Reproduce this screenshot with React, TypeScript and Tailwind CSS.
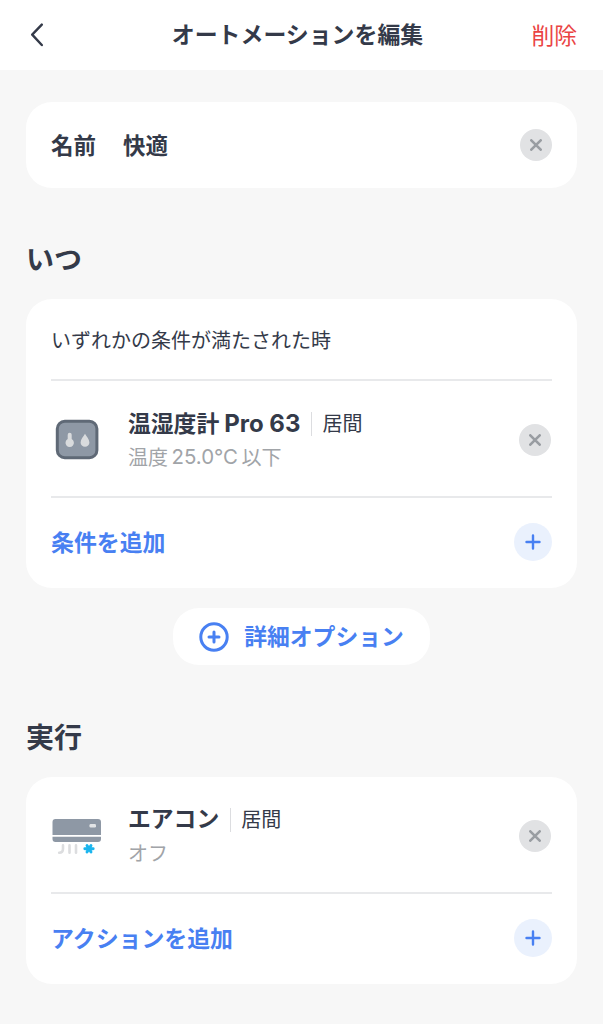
import type { ReactNode } from 'react';

function BackIcon() {
  return (
    <svg
      className="h-6 w-4"
      viewBox="0 0 16 24"
      fill="none"
      stroke="#343a49"
      strokeWidth="2.4"
      strokeLinecap="round"
      strokeLinejoin="round"
      aria-hidden
    >
      <path d="M12.8 1.6 3.2 11.6l9.6 10.4" />
    </svg>
  );
}

function MeterIcon() {
  return (
    <svg className="h-11 w-[50px]" viewBox="0 0 50 44" aria-hidden>
      <rect x="6.3" y="3.3" width="39.6" height="36.4" rx="7.5" fill="#8e98a5" stroke="#5f6976" strokeWidth="3" />
      <path d="M16.7 16.8a2 2 0 0 1 4 0v4.3a4.2 4.2 0 1 1-4 0z" fill="#d9dbdd" />
      <path
        d="M34 15.8c1.7 2.9 4.4 5.6 4.4 8.6a4.4 4.4 0 0 1-8.8 0c0-3 2.7-5.7 4.4-8.6z"
        fill="#d9dbdd"
      />
    </svg>
  );
}

function AirConditionerIcon() {
  return (
    <svg className="h-11 w-[50px]" viewBox="0 0 50 44" fill="none" aria-hidden>
      <path d="M4.5 5H47a3 3 0 0 1 3 3v13H1.500V8a3 3 0 0 1 3-3z" fill="#8e98a5" />
      <path d="M1.5 22.800H50V25a3 3 0 0 1-3 3H4.500a3 3 0 0 1-3-3z" fill="#8e98a5" />
      <rect x="38.5" y="10" width="6.500" height="3.400" rx="1.200" fill="#e2e4e6" />
      <path
        d="M12 31.400v3.300q0 4-3.800 4M18.500 31.400v7.300M25 31.400v7.300"
        stroke="#dcdddf"
        strokeWidth="2.6"
        strokeLinecap="round"
      />
      <path
        d="M33.800 34.800h8.400M36 31.600l4 6.400M40 31.600l-4 6.400"
        stroke="#1bb5ee"
        strokeWidth="2.9"
        strokeLinecap="round"
      />
    </svg>
  );
}

function ClearButton({ label }: { label: string }) {
  return (
    <button
      type="button"
      aria-label={label}
      className="flex size-8 shrink-0 items-center justify-center rounded-full bg-[#e1e2e4]"
    >
      <svg
        className="size-3"
        viewBox="0 0 12 12"
        stroke="#999da2"
        strokeWidth="2.6"
        strokeLinecap="round"
        aria-hidden
      >
        <path d="M1.300 1.300l9.400 9.400M10.700 1.300l-9.400 9.400" />
      </svg>
    </button>
  );
}

function AddRow({ label }: { label: string }) {
  return (
    <button type="button" className="flex h-[90px] w-full items-center justify-between pb-0.5">
      <span className="pt-0.5 text-[22.9px] font-bold text-[#4880f2]">{label}</span>
      <span className="flex size-[38px] items-center justify-center rounded-full bg-[#eaf1fd]">
        <svg
          className="size-4"
          viewBox="0 0 16 16"
          stroke="#4880f2"
          strokeWidth="2.4"
          strokeLinecap="round"
          aria-hidden
        >
          <path d="M8 1.500v13M1.500 8h13" />
        </svg>
      </span>
    </button>
  );
}

type DeviceRowProps = {
  icon: ReactNode;
  name: ReactNode;
  room: string;
  status: ReactNode;
};

function DeviceRow({ icon, name, room, status }: DeviceRowProps) {
  return (
    <div className="flex h-[117px] items-center border-b-2 border-[#e8e9eb] pt-0.5">
      {icon}
      <div className="ml-[27px] flex-1 pt-0.5">
        <div className="flex h-[34px] items-center">
          <span className="flex items-baseline text-[22.8px] font-bold">{name}</span>
          <span className="mr-2.5 ml-[11px] h-6 w-px bg-[#dcdde0]" />
          <span className="text-[20px]">{room}</span>
        </div>
        <div className="flex h-[34px] items-center text-[20px] text-[#a1a4a8]">{status}</div>
      </div>
      <div className="mr-px">
        <ClearButton label="削除" />
      </div>
    </div>
  );
}

export default function App() {
  return (
    <div className="min-h-screen bg-[#f7f7f7] font-[Inter,'Noto_Sans_CJK_JP',sans-serif] text-[#343a49]" lang="ja">
      <header className="grid h-[70px] grid-cols-[1fr_auto_1fr] items-center bg-white px-[26px]">
        <button type="button" aria-label="戻る" className="justify-self-start pl-[3px]">
          <BackIcon />
        </button>
        <h1 className="-ml-2 pt-px text-[22.9px] font-bold">オートメーションを編集</h1>
        <button type="button" className="justify-self-end pt-0.5 text-[22.8px] text-[#ea4444]">
          削除
        </button>
      </header>

      <main className="px-[26px] pt-8">
        <section className="flex h-[86px] items-center rounded-[26px] bg-white px-[25px] text-[22.5px] font-bold">
          <span className="pt-0.5">名前</span>
          <span className="ml-[27px] flex-1 pt-0.5">快適</span>
          <ClearButton label="クリア" />
        </section>

        <h2 className="mt-[52px] h-10 text-[28px] leading-10 font-bold">いつ</h2>
        <section className="mt-[19px] rounded-[26px] bg-white px-[25px]">
          <p className="flex h-[82px] items-center border-b-2 border-[#e8e9eb] pt-[3px] text-[20px]">
            いずれかの条件が満たされた時
          </p>
          <DeviceRow
            icon={<MeterIcon />}
            name={
              <>
                温湿度計
                <span className="ml-[5px] text-[24px]">Pro 63</span>
              </>
            }
            room="居間"
            status={
              <>
                温度
                <span className="mx-[3.500px] text-[20.400px]">25.0°C</span>
                以下
              </>
            }
          />
          <AddRow label="条件を追加" />
        </section>

        <button
          type="button"
          className="mx-auto mt-5 flex h-[57px] w-[257px] items-center justify-center gap-[15px] rounded-[26px] bg-white text-[22.8px] font-bold text-[#4880f2]"
        >
          <svg
            className="size-[30px]"
            viewBox="0 0 30 30"
            fill="none"
            stroke="currentColor"
            strokeWidth="3"
            strokeLinecap="round"
            aria-hidden
          >
            <circle cx="15" cy="15" r="13.2" />
            <path d="M15 10v10M10 15h10" />
          </svg>
          <span className="pt-px">詳細オプション</span>
        </button>

        <h2 className="mt-[53px] h-10 text-[28px] leading-10 font-bold">実行</h2>
        <section className="mt-[19px] rounded-[26px] bg-white px-[25px]">
          <DeviceRow icon={<AirConditionerIcon />} name="エアコン" room="居間" status="オフ" />
          <AddRow label="アクションを追加" />
        </section>
      </main>
    </div>
  );
}
